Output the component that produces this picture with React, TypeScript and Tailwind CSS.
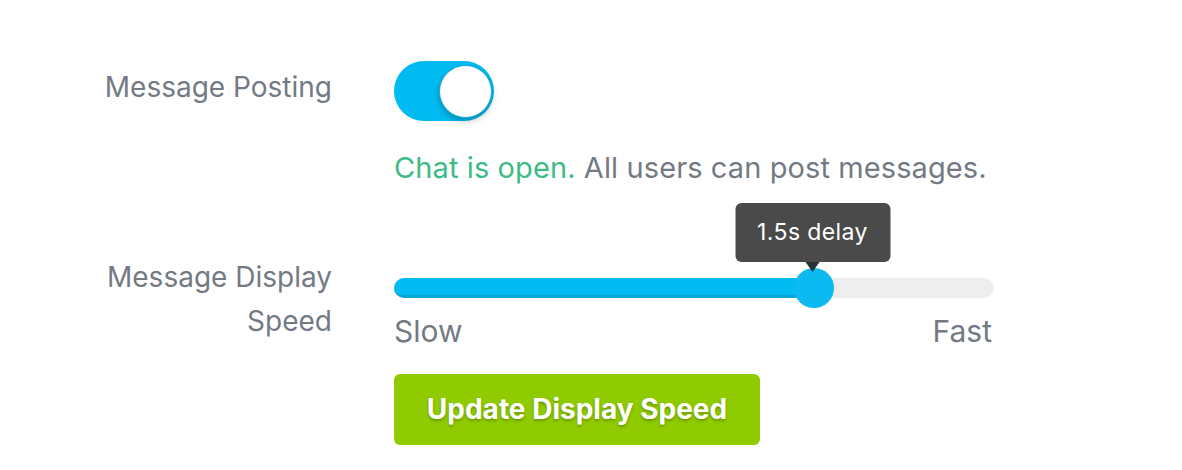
import React from "react";

export default function App() {
  const pct = 70;
  return (
    <div
      className="w-[1182px] h-[470px] bg-white overflow-hidden"
      style={{ fontFamily: "Inter, 'Noto Sans', sans-serif" }}
    >
      <div className="flex flex-col pt-[61px]">
        {/* Row 1 */}
        <div className="flex items-start">
          <div className="w-[332px] shrink-0 pt-[7.5px] text-right text-[28px] leading-[36px] text-[#737a84]">
            Message Posting
          </div>
          <div className="ml-[62px]">
            <div className="relative h-[60px] w-[100px] rounded-full bg-[#00bbf1]">
              <div className="absolute right-[2px] top-[4px] h-[53px] w-[53px] rounded-full border border-[#1aa7d4] bg-white shadow-[0_3px_6px_rgba(0,0,0,0.25)]" />
            </div>
            <div className="mt-[29px] h-[36px] whitespace-nowrap text-[29px] leading-[36px] tracking-[0.1px]">
              <span className="text-[#3cbb85]">Chat is open.</span>{" "}
              <span className="text-[#737a84]">All users can post messages.</span>
            </div>
          </div>
        </div>

        {/* Row 2 */}
        <div className="flex items-start">
          <div className="mt-[68.5px] w-[332px] shrink-0 text-right text-[28px] leading-[44px] text-[#737a84]">
            Message Display
            <br />
            Speed
          </div>
          <div className="ml-[62px] mt-[81.5px] w-[600px]">
            <div className="relative h-[40px] w-[600px]">
              <div className="absolute left-0 right-0 top-[10px] h-[20px] rounded-full bg-[#eeeeee]" />
              <div
                className="absolute left-0 top-[10px] h-[20px] rounded-full border-b-[3px] border-[#0aa6d6] bg-[#00bcf3]"
                style={{ width: `${pct}%` }}
              />
              <div
                className="absolute top-0 h-[40px] w-[40px] -translate-x-1/2 rounded-full bg-[#0cb9f1]"
                style={{ left: `${pct}%` }}
              />
              <div
                className="absolute bottom-[45.5px] flex -translate-x-1/2 flex-col items-center"
                style={{ left: "calc(70% - 1.5px)" }}
              >
                <div className="flex h-[59px] w-[155px] items-center justify-center rounded-[6px] bg-[#4a4a4a] text-[23px] tracking-[0.4px] text-white">
                  1.5s delay
                </div>
                <div className="-mb-[10px] h-0 w-0 border-l-[7px] border-r-[7px] border-t-[10px] border-l-transparent border-r-transparent border-t-[#263238]" />
              </div>
            </div>
            <div className="mt-[5px] flex justify-between text-[30px] leading-[36px] text-[#737a84]">
              <span>Slow</span>
              <span className="pr-[2px]">Fast</span>
            </div>
            <button className="mt-[25px] flex h-[71px] w-[366px] items-center justify-center rounded-[6px] bg-[#8fcb00] text-[28px] font-bold text-white [text-shadow:0_2px_3px_rgba(0,0,0,0.25)]">
              Update Display Speed
            </button>
          </div>
        </div>
      </div>
    </div>
  );
}
